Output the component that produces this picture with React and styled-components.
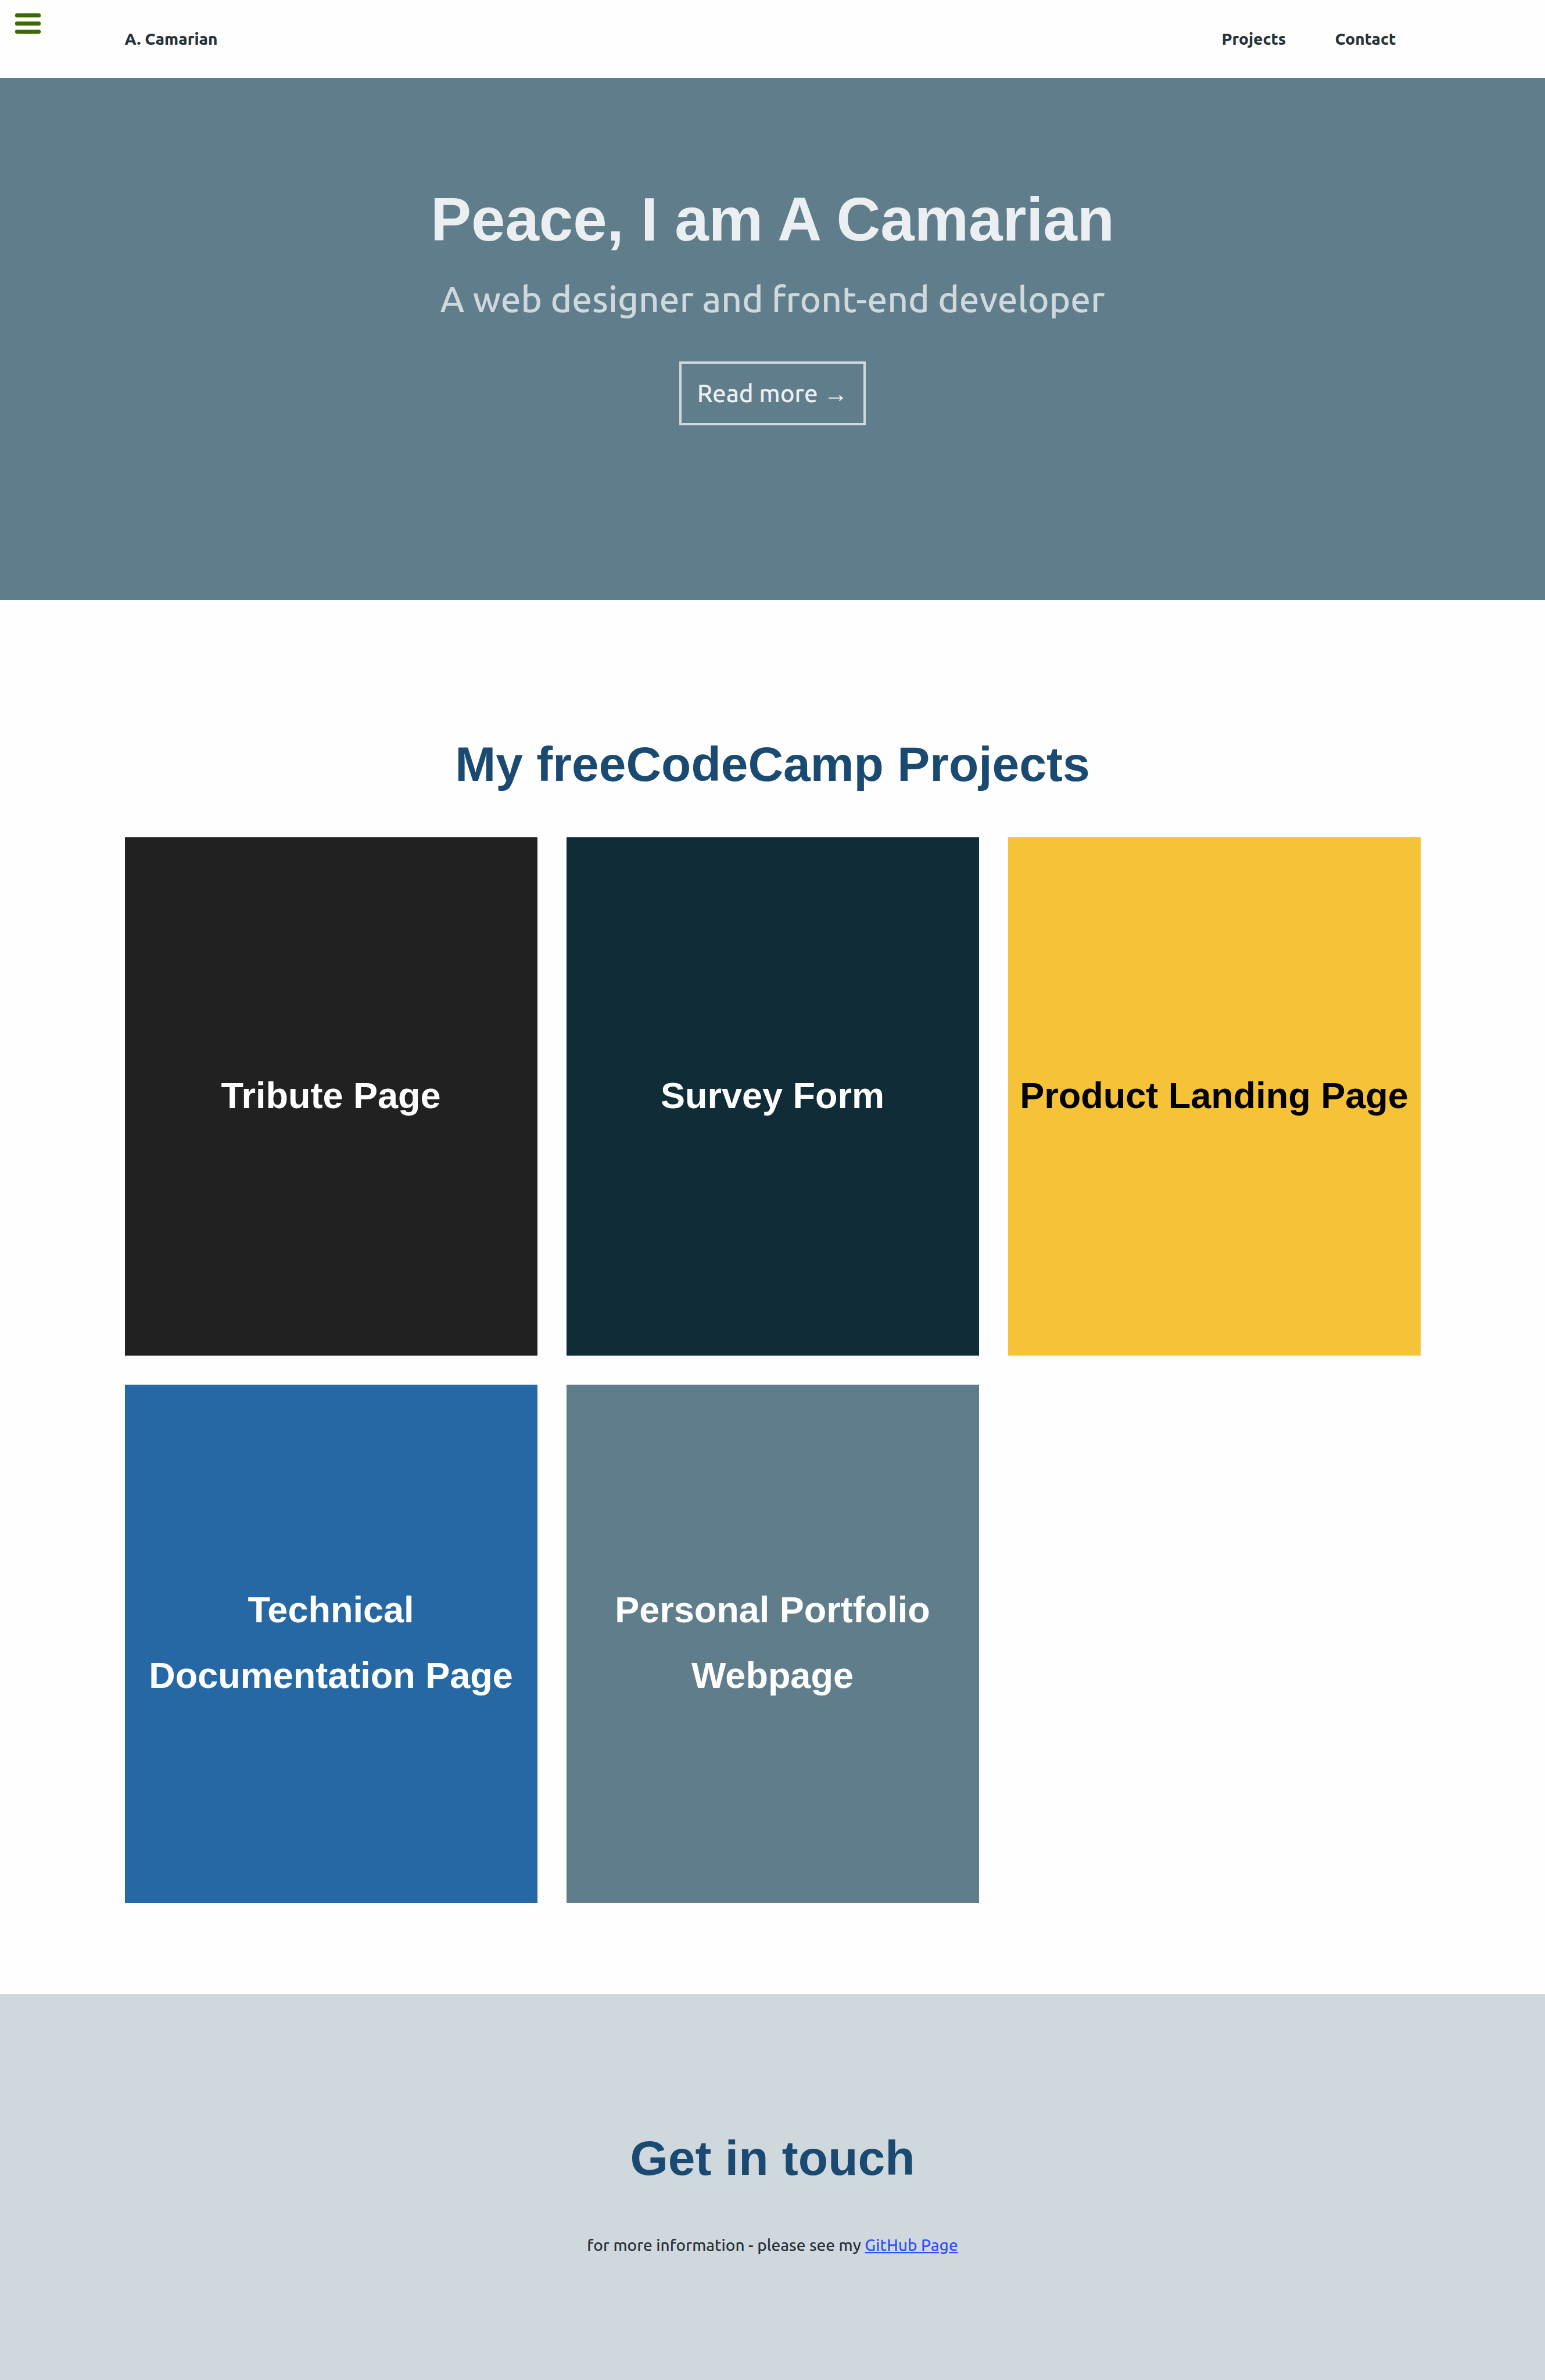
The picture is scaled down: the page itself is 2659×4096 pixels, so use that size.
import React from "react";
import styled, { createGlobalStyle } from "styled-components";

const sans = `"Ubuntu", "Ubuntu Sans", "Noto Sans", "Open Sans", sans-serif`;
const display = `"Liberation Sans", Arial, sans-serif`;

const GlobalStyle = createGlobalStyle`
  *, *::before, *::after { box-sizing: border-box; }
  body {
    margin: 0;
    background: #fefefe;
    color: #263238;
    font-family: ${sans};
    font-size: 28px;
    font-weight: 500;
    line-height: 48px;
  }
  h1, h2, h3, p { margin: 0; }
`;

const Container = styled.div`
  width: 100%;
  max-width: 2230px;
  margin: 0 auto;
`;

const Header = styled.header`
  position: relative;
  padding: 43px 0;
`;

const MenuButton = styled.button`
  position: absolute;
  top: 14px;
  left: 14px;
  display: flex;
  flex-direction: column;
  gap: 7px;
  padding: 9px 12px;
  border: 0;
  background: #fffffc;
  cursor: pointer;
`;

const MenuBar = styled.span`
  width: 44px;
  height: 7px;
  border-radius: 3px;
  background: #3b6a07;
`;

const HeaderRow = styled(Container)`
  display: flex;
  align-items: center;
  justify-content: space-between;
`;

const HeaderLink = styled.a`
  color: inherit;
  font-weight: 800;
  text-decoration: none;
`;

const Nav = styled.nav`
  display: flex;
  gap: 84px;
  padding-right: 42px;
`;

const Hero = styled.section`
  display: flex;
  flex-direction: column;
  align-items: center;
  padding: 181px 0 301px;
  background: #607d8b;
  text-align: center;
`;

const HeroTitle = styled.h1`
  color: #eceff1;
  font-family: ${display};
  font-size: 105px;
  line-height: 126px;
`;

const HeroSubtitle = styled.p`
  margin: 16px 0 51px;
  color: #cfd8dc;
  font-size: 62px;
  line-height: 114px;
`;

const HeroLink = styled.a`
  padding: 14px 27px;
  border: 4px solid #cfd8dc;
  color: #eceff1;
  font-size: 42px;
  line-height: 74px;
  text-decoration: none;
`;

const Section = styled.section`
  padding: 232px 0 ${({ $bottom }) => $bottom}px;
  background: ${({ $background }) => $background};
  text-align: center;
`;

const SectionTitle = styled.h2`
  margin-bottom: 76px;
  color: #1a4971;
  font-family: ${display};
  font-size: 84px;
  line-height: 100px;
`;

const ProjectGrid = styled.div`
  display: grid;
  grid-template-columns: repeat(3, 1fr);
  gap: 50px;
`;

const ProjectCard = styled.a`
  display: flex;
  align-items: center;
  justify-content: center;
  min-height: 892px;
  padding: 0 20px 4px;
  background: ${({ $background }) => $background};
  color: ${({ $color }) => $color};
  text-decoration: none;
`;

const ProjectTitle = styled.h3`
  font-family: ${display};
  font-size: 63px;
  line-height: 113px;
`;

const TextLink = styled.a`
  color: #304ffe;
`;

const projects = [
  { title: "Tribute Page", background: "#212121", color: "#ffffff" },
  { title: "Survey Form", background: "#102c36", color: "#ffffff" },
  { title: "Product Landing Page", background: "#f6c237", color: "#000000" },
  { title: "Technical Documentation Page", background: "#2568a3", color: "#ffffff" },
  { title: "Personal Portfolio Webpage", background: "#607d8b", color: "#ffffff" },
];

export default function App() {
  return (
    <>
      <GlobalStyle />
      <Header>
        <MenuButton type="button" aria-label="Menu">
          <MenuBar />
          <MenuBar />
          <MenuBar />
        </MenuButton>
        <HeaderRow>
          <HeaderLink href="#top">A. Camarian</HeaderLink>
          <Nav>
            <HeaderLink href="#projects">Projects</HeaderLink>
            <HeaderLink href="#contact">Contact</HeaderLink>
          </Nav>
        </HeaderRow>
      </Header>
      <main>
        <Hero id="top">
          <HeroTitle>Peace, I am A Camarian</HeroTitle>
          <HeroSubtitle>A web designer and front-end developer</HeroSubtitle>
          <HeroLink href="#projects">Read more →</HeroLink>
        </Hero>
        <Section id="projects" $bottom={157} $background="#fefefe">
          <Container>
            <SectionTitle>My freeCodeCamp Projects</SectionTitle>
            <ProjectGrid>
              {projects.map(({ title, background, color }) => (
                <ProjectCard key={title} href="#projects" $background={background} $color={color}>
                  <ProjectTitle>{title}</ProjectTitle>
                </ProjectCard>
              ))}
            </ProjectGrid>
          </Container>
        </Section>
        <Section id="contact" $bottom={208} $background="#cfd8dd">
          <SectionTitle>Get in touch</SectionTitle>
          <p>
            for more information - please see my <TextLink href="#github">GitHub Page</TextLink>
          </p>
        </Section>
      </main>
    </>
  );
}
